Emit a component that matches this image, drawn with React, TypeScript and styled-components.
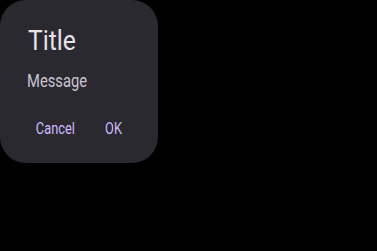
import React from "react";
import styled, { createGlobalStyle } from "styled-components";

const Global = createGlobalStyle`
  html, body { margin: 0; padding: 0; background: #000; }
  body { font-family: Roboto, "Noto Sans", sans-serif; width: 377px; height: 251px; overflow: hidden; }
`;

const Dialog = styled.div`
  width: 158px;
  height: 163px;
  box-sizing: border-box;
  background: #2b2930;
  border-radius: 26px;
  padding: 25px 26px 0 27px;
  display: flex;
  flex-direction: column;
  align-items: flex-start;
`;

const Title = styled.div`
  color: #e6e1e5;
  font-size: 28px;
  line-height: 32px;
  margin-left: 1px;
  transform: scaleX(0.88);
  transform-origin: left center;
`;

const Message = styled.div`
  color: #cac4d0;
  font-size: 18px;
  line-height: 24px;
  margin-top: 12px;
  transform: scaleX(0.82);
  transform-origin: left center;
`;

const Actions = styled.div`
  align-self: stretch;
  display: flex;
  justify-content: flex-end;
  gap: 7px;
  margin-top: 15px;
`;

const Button = styled.button`
  background: none;
  border: none;
  padding: 0 8px;
  height: 40px;
  color: #d0bcff;
  font-family: Roboto, sans-serif;
  font-size: 16px;
  font-weight: 400;
`;

const Label = styled.span`
  display: inline-block;
  transform: scaleX(0.8);
`;

export default function App() {
  return (
    <>
      <Global />
      <Dialog>
        <Title>Title</Title>
        <Message>Message</Message>
        <Actions>
          <Button><Label>Cancel</Label></Button>
          <Button><Label>OK</Label></Button>
        </Actions>
      </Dialog>
    </>
  );
}
